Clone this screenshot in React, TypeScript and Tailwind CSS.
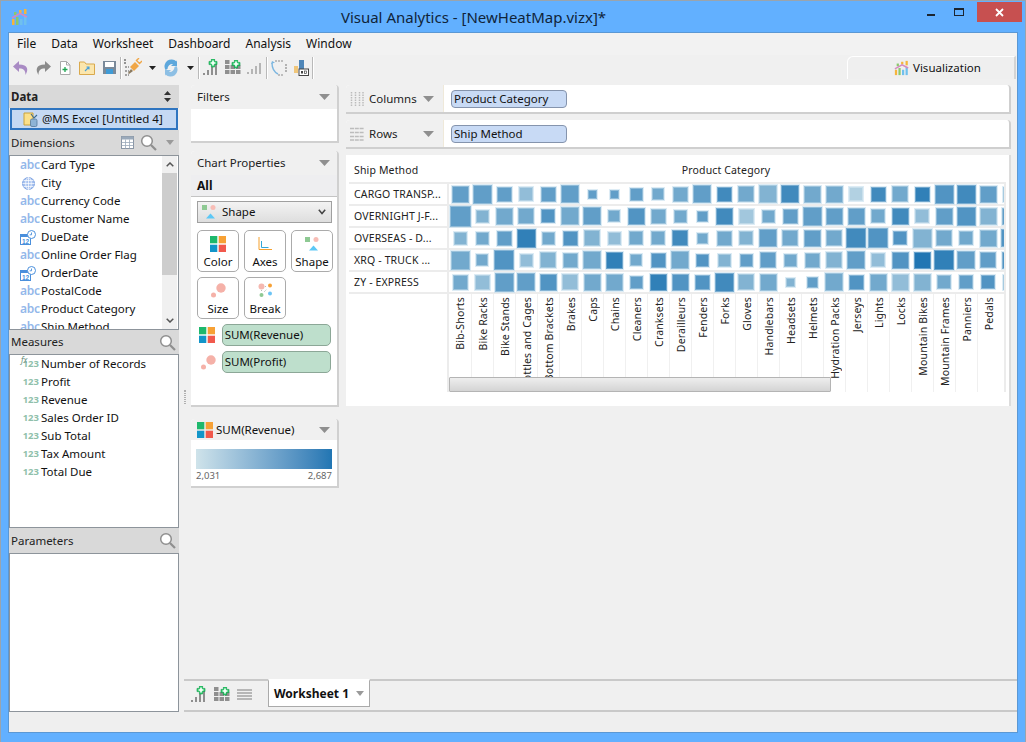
import React from "react";

const UI = "font-['Open_Sans',sans-serif]";
const CHART = "font-['Liberation_Sans',Arial,sans-serif]";

const S = ({ w = 20, h = 20, vb = "0 0 20 20", children }: { w?: number; h?: number; vb?: string; children: React.ReactNode }) => (
  <svg width={w} height={h} viewBox={vb} className="shrink-0 block">{children}</svg>
);

const Plus = ({ x, y, s = 10 }: { x: number; y: number; s?: number }) => (
  <g transform={`translate(${x} ${y}) scale(${s / 10})`}>
    <path d="M3 0h4v3h3v4H7v3H3V7H0V3h3z" fill="#2fd26f" stroke="#0f9c4a" strokeWidth="0.8" />
    <path d="M4 2h2v2h2v2H6v2H4V6H2V4h2z" fill="#fff" />
  </g>
);

const AppLogo = ({ size = 18 }: { size?: number }) => (
  <S w={size} h={size} vb="0 0 18 18">
    <rect x="1" y="11" width="2.5" height="6" fill="#f5b53c" />
    <rect x="5" y="9" width="2.5" height="8" fill="#8cc86c" />
    <rect x="9" y="11" width="2.5" height="6" fill="#6fc0ee" />
    <rect x="13" y="8" width="2.5" height="9" fill="#6fc0ee" />
    <rect x="3" y="4" width="2.5" height="3" fill="#8cc86c" />
    <rect x="8" y="2" width="2.5" height="3" fill="#f5b53c" />
    <rect x="13" y="1" width="2.5" height="5" fill="#f5b53c" />
    <path d="M1 10 L9 5.5 L16 9" stroke="#d48ac0" strokeWidth="1.6" fill="none" />
  </S>
);

const Undo = () => (
  <S w={18} h={16} vb="0 0 18 16"><path d="M7 1 L1 6.5 L7 12 V8.5 C11 8.3 13.5 10 13.5 15 C16.5 10 16.5 4.5 7 4.5 Z" fill="#a98bc4" /></S>
);
const Redo = () => (
  <S w={18} h={16} vb="0 0 18 16"><path d="M11 1 L17 6.5 L11 12 V8.5 C7 8.3 4.5 10 4.5 15 C1.5 10 1.5 4.5 11 4.5 Z" fill="#8b8b8b" /></S>
);
const NewDoc = () => (
  <S w={14} h={16} vb="0 0 14 16">
    <path d="M2.5 1.5h6l3.5 3.5v9.5h-9.5z" fill="#fff" stroke="#a9a9a9" />
    <path d="M8.5 1.5v3.5h3.5" fill="none" stroke="#a9a9a9" />
    <path d="M7 7v5M4.5 9.5h5" stroke="#1fa653" strokeWidth="1.3" />
  </S>
);
const Folder = () => (
  <S w={16} h={14} vb="0 0 16 14">
    <path d="M.5 1h5l1.5 2h8.5v10.5H.5z" fill="#fbe6ad" stroke="#d9a94d" />
    <path d="M6 10l4-4M7.5 6H10v2.5" stroke="#4aa0d8" strokeWidth="1.1" fill="none" />
  </S>
);
const Save = () => (
  <S w={15} h={15} vb="0 0 15 15">
    <rect x="1" y="1" width="13" height="13" fill="#7a8a9a" />
    <rect x="3" y="2" width="9" height="5" fill="#fff" />
    <rect x="4" y="9" width="7" height="5" fill="#3f9bd6" />
  </S>
);
const Plug = () => (
  <S w={18} h={20} vb="0 0 18 20">
    <path d="M1 1v5M1 9h4M1 13h4M1 17h4" stroke="#555" strokeWidth="1.2" strokeDasharray="2 1" />
    <path d="M6 9l5-5 4 4-5 5z" fill="#f0a646" />
    <path d="M12 2l4 4M15 0l-3 3M18 3l-3 3" stroke="#f0a646" strokeWidth="1.4" />
    <path d="M4 15l3-4 2 2-4 3z" fill="#8a7a60" />
  </S>
);
const Refresh = () => (
  <S w={16} h={18} vb="0 0 16 18">
    <path d="M13.5 2.5A7 7 0 0 0 2.5 11l2-1A5 5 0 0 1 10 5L8 7h6V1z" fill="#5da7dc" />
    <path d="M2.5 15.5A7 7 0 0 0 13.5 7l-2 1A5 5 0 0 1 6 13l2-2H2v6z" fill="#8dbfe4" />
  </S>
);
const Arrow = ({ color = "#222" }: { color?: string }) => (
  <S w={7} h={4} vb="0 0 7 4"><path d="M0 0h7L3.5 4z" fill={color} /></S>
);
const Bars = ({ plus }: { plus?: boolean }) => (
  <S w={16} h={plus ? 18 : 16} vb={plus ? "0 0 16 18" : "0 0 16 16"}>
    <g fill={plus ? "#8f8f8f" : "#b5b5b5"} transform={plus ? "translate(0 2)" : ""}>
      <rect x="0" y="12" width="2" height="2" />
      <rect x="4" y="9" width="2" height="5" />
      <rect x="8" y="6" width="2" height="8" />
      <rect x="12" y="3" width="2" height="11" />
    </g>
    {plus && <Plus x={6} y={0} s={8} />}
  </S>
);
const GridPlus = () => (
  <S w={16} h={15} vb="0 0 16 15">
    <g fill="#8f8f8f">
      {[0, 5.5, 11].map((x) => [0, 5, 10].map((y) => (!(x > 5 && y < 5) ? <rect key={`${x}${y}`} x={x} y={y} width="4.5" height="4" /> : null)))}
    </g>
    <Plus x={7} y={0} s={8} />
  </S>
);
const Rotate = () => (
  <S w={16} h={16} vb="0 0 16 16">
    <path d="M4 1h9M15 4v8M12 15H6" stroke="#8a8a8a" strokeWidth="1.2" strokeDasharray="2 1" fill="none" />
    <path d="M1 3 C1 8 3 12 7 14" stroke="#7db7e0" strokeWidth="1.4" fill="none" />
    <path d="M0 4l1-3 3 1.500z" fill="#7db7e0" />
  </S>
);
const BarLock = () => (
  <S w={15} h={16} vb="0 0 15 16">
    <rect x="0" y="6" width="4" height="7" fill="#f0c67a" />
    <rect x="5" y="0" width="5" height="9" fill="#4f86b8" />
    <rect x="5" y="9" width="9.500" height="6.500" fill="#fff" stroke="#444" />
    <rect x="7" y="11" width="2" height="2.500" fill="#444" />
    <rect x="10.500" y="11" width="2" height="2.500" fill="none" stroke="#444" strokeWidth="0.7" />
  </S>
);
const Search = () => (
  <S w={17} h={17} vb="0 0 17 17">
    <circle cx="7" cy="7" r="5.300" fill="#fff" stroke="#8f8f8f" strokeWidth="1.500" />
    <path d="M11 11l5 5" stroke="#8f8f8f" strokeWidth="2.200" />
  </S>
);
const TableIcon = () => (
  <S w={13} h={13} vb="0 0 13 13">
    <rect x=".5" y=".5" width="12" height="12" fill="#fff" stroke="#8a96a5" />
    <rect x=".5" y=".5" width="12" height="3" fill="#9aa9ba" />
    <path d="M4.500 3.500v9M8.500 3.500v9M.5 6.500h12M.5 9.500h12" stroke="#9aa9ba" strokeWidth=".8" />
  </S>
);
const Globe = () => (
  <S w={13} h={13} vb="0 0 13 13">
    <circle cx="6.500" cy="6.500" r="6" fill="#a9c3ef" stroke="#7fa4e2" />
    <ellipse cx="6.500" cy="6.500" rx="2.800" ry="6" fill="none" stroke="#fff" strokeWidth=".7" />
    <path d="M.5 6.500h12M1.500 3.500h10M1.500 9.500h10M6.500 .5v12" stroke="#fff" strokeWidth=".7" />
  </S>
);
const DateIcon = () => (
  <S w={16} h={15} vb="0 0 16 15">
    <rect x=".5" y="4.500" width="10" height="10" fill="#fff" stroke="#4a8fdc" />
    <rect x=".5" y="4.500" width="10" height="2.500" fill="#4a8fdc" />
    <text x="2" y="13.500" fontSize="6.500" fontWeight="700" fill="#4a8fdc" fontFamily="Liberation Sans">12</text>
    <circle cx="11.500" cy="4.500" r="4" fill="#fff" stroke="#4a8fdc" />
    <path d="M11.500 2.500v2.300h-1.800" stroke="#4a8fdc" fill="none" strokeWidth=".9" />
  </S>
);
const DataSource = () => (
  <S w={15} h={15} vb="0 0 15 15">
    <path d="M1 1h9v12H1z" fill="#fbe08a" stroke="#c9a23c" />
    <path d="M8 2l3 4 3-3" stroke="#3a6a8c" fill="none" strokeWidth="1.100" />
    <rect x="7.500" y="7" width="6.500" height="7.500" rx="1.500" fill="#8db3d6" stroke="#54789c" strokeWidth=".8" />
  </S>
);
const ColorSq = ({ size = 16 }: { size?: number }) => (
  <S w={size} h={size} vb="0 0 16 16">
    <rect x="0" y="0" width="7.300" height="7.300" fill="#1eb86c" />
    <rect x="8.700" y="0" width="7.300" height="7.300" fill="#f7a135" />
    <rect x="0" y="8.700" width="7.300" height="7.300" fill="#1295c9" />
    <rect x="8.700" y="8.700" width="7.300" height="7.300" fill="#f1594d" />
  </S>
);
const ShapeIcon = () => (
  <S w={14} h={14} vb="0 0 14 14">
    <rect x="0" y="0" width="5" height="5" fill="#8ec993" />
    <circle cx="11" cy="2.500" r="2.500" fill="#f8bdb6" />
    <path d="M4 13.500h9L8.500 8.500z" fill="#5cc8f6" />
  </S>
);
const SizeIcon = ({ w = 15 }: { w?: number }) => (
  <S w={w} h={w} vb="0 0 15 15">
    <circle cx="10" cy="5" r="4.700" fill="#f5b1a8" />
    <circle cx="2.500" cy="12" r="2.500" fill="#f5b1a8" />
  </S>
);
const AxesIcon = () => (
  <S w={14} h={14} vb="0 0 14 14">
    <path d="M1 0v12.500h13" stroke="#f5a12f" strokeWidth="1" fill="none" />
    <path d="M3.500 4v6.500h7" stroke="#33a7d8" strokeWidth="1" fill="none" />
  </S>
);
const BreakIcon = () => (
  <S w={15} h={15} vb="0 0 15 15">
    <circle cx="3.500" cy="3.500" r="3" fill="#f5b8b0" />
    <circle cx="12" cy="2.500" r="2" fill="#f7a135" />
    <circle cx="3.500" cy="12" r="2" fill="#8ec993" />
    <circle cx="12" cy="10.500" r="2" fill="#6cc4f5" />
    <path d="M7 3.500h2M3.500 7v2M6 9l3-3" stroke="#aaa" strokeWidth=".8" strokeDasharray="1 1" />
  </S>
);

const Caret = () => (
  <S w={11} h={6} vb="0 0 11 6"><path d="M0 0h11L5.500 6z" fill="#8f8f8f" /></S>
);

const Abc = () => <span className={`w-[19px] text-[12px] leading-none font-semibold text-[#93b7ea] tracking-[-0.3px] ${CHART}`}>abc</span>;
const N123 = ({ fx }: { fx?: boolean }) => (
  <span className={`relative w-[19px] text-[9.5px] leading-none font-bold text-right text-[#8fbfab] ${CHART}`}>
    {fx && <i className="absolute left-[1px] -top-[3px] text-[8px] font-normal text-[#6f9585]">fx</i>}
    123
  </span>
);

const dims: [string, "a" | "g" | "d"][] = [
  ["Card Type", "a"], ["City", "g"], ["Currency Code", "a"], ["Customer Name", "a"], ["DueDate", "d"],
  ["Online Order Flag", "a"], ["OrderDate", "d"], ["PostalCode", "a"], ["Product Category", "a"], ["Ship Method", "a"],
];
const meas = ["Number of Records", "Profit", "Revenue", "Sales Order ID", "Sub Total", "Tax Amount", "Total Due"];
const cats = ["Bib-Shorts", "Bike Racks", "Bike Stands", "Bottles and Cages", "Bottom Brackets", "Brakes", "Caps", "Chains", "Cleaners", "Cranksets", "Derailleurs", "Fenders", "Forks", "Gloves", "Handlebars", "Headsets", "Helmets", "Hydration Packs", "Jerseys", "Lights", "Locks", "Mountain Bikes", "Mountain Frames", "Panniers", "Pedals"];

const rowsData: { name: string; sizes: number[]; shade: number[] }[] = [
  { name: "CARGO TRANSP...", sizes: [18,20,16,15,16,19,10,10,14,13,16,19,16,17,19,19,18,18,15,16,17,16,20,20,18,16], shade: [5,5,5,2,5,5,5,5,5,4,4,5,7,4,3,7,4,4,0,7,4,8,6,7,5,3] },
  { name: "OVERNIGHT J-F...", sizes: [22,14,18,17,15,19,19,13,18,16,14,12,18,16,14,16,20,18,18,15,18,15,18,20,18,18], shade: [5,3,4,4,6,4,5,4,6,4,4,5,7,1,4,5,5,5,5,4,7,2,5,6,3,5] },
  { name: "OVERSEAS - D...", sizes: [14,14,16,20,14,16,17,14,15,15,17,12,16,15,19,17,18,17,21,21,15,20,17,15,18,19], shade: [3,4,5,8,4,6,3,2,4,4,7,4,4,3,5,4,5,4,7,6,6,3,4,4,4,6] },
  { name: "XRQ - TRUCK ...", sizes: [20,13,21,14,17,16,19,18,13,16,19,14,14,14,17,14,16,17,19,15,18,18,21,19,17,18], shade: [4,4,6,2,3,4,4,8,4,6,4,6,3,5,5,4,4,3,5,2,6,9,8,5,5,6] },
  { name: "ZY - EXPRESS", sizes: [16,16,20,19,18,17,18,18,14,18,18,16,20,17,18,10,12,19,16,18,18,18,15,15,15,16], shade: [4,2,5,5,6,2,4,4,5,8,6,6,7,3,4,3,5,4,6,4,2,3,4,5,6,3] },
];

const shadeColor = (v: number) => {
  const t = v / 9;
  const a = [178, 209, 226];
  const b = [33, 118, 179];
  return `rgb(${a.map((c, i) => Math.round(c + (b[i] - c) * t)).join(",")})`;
};

const TBtn = ({ w = 22, children }: { w?: number; children: React.ReactNode }) => (
  <div className="h-[25px] flex items-center justify-center shrink-0" style={{ width: w }}>{children}</div>
);
const TSep = () => <div className="w-[2px] h-[22px] bg-[#b9b9b9] border-r border-white shrink-0" />;

const FieldRow = ({ icon, label }: { icon: React.ReactNode; label: string }) => (
  <div className="h-[18px] pl-[10px] flex items-center shrink-0 whitespace-nowrap">
    <div className="w-[20px] flex justify-start items-center">{icon}</div>
    <span className="text-[#111] ml-[1px]">{label}</span>
  </div>
);

const SideHeader = ({ label, h, children }: { label: string; h: number; children?: React.ReactNode }) => (
  <div className="bg-[#d9d9d9] pl-[2px] pr-[2px] flex items-center justify-between shrink-0" style={{ height: h }}>
    <span className="text-[#222]">{label}</span>
    <div className="flex items-center gap-[6px]">{children}</div>
  </div>
);

const Card = ({ className = "", children }: { className?: string; children: React.ReactNode }) => (
  <div className={`bg-white rounded-t-[4px] border-r-2 border-b-2 border-[#d0d0d0] overflow-hidden ${className}`}>{children}</div>
);
const CardHead = ({ children }: { children: React.ReactNode }) => (
  <div className="h-[24px] bg-[#f0f0f0] pl-[6px] pr-[7px] flex items-center justify-between text-[#222] shrink-0">{children}</div>
);

const PropBtn = ({ icon, label }: { icon: React.ReactNode; label: string }) => (
  <div className="w-[42px] h-[42px] rounded-[5px] border border-[#ababab] bg-white flex flex-col items-center pt-[4px] shrink-0">
    <div className="h-[17px] flex items-center justify-center">{icon}</div>
    <span className="mt-[2px] text-[#111]">{label}</span>
  </div>
);
const GreenPill = ({ label }: { label: string }) => (
  <div className="h-[22px] w-[111px] rounded-[5px] bg-[#bedfcc] border border-[#8ca797] pl-[2px] flex items-center text-[#111]">{label}</div>
);
const BluePill = ({ label }: { label: string }) => (
  <div className="w-[116px] h-[18px] rounded-[4px] bg-[#c8daf5] border border-[#8594ad] pl-[2px] flex items-center text-[#111]">{label}</div>
);
const Shelf = ({ icon, label, pill }: { icon: React.ReactNode; label: string; pill: string }) => (
  <div className="h-[29px] bg-white rounded-t-[4px] border-b-2 border-r-2 border-[#cfcfcf] flex overflow-hidden shrink-0">
    <div className="w-[98px] bg-[#f0f0f0] border-r border-[#efe9da] flex items-center pl-[4px] pr-[9px] shrink-0">
      <div className="w-[19px]">{icon}</div>
      <span className="flex-1 text-[#222]">{label}</span>
      <Caret />
    </div>
    <div className="pl-[7px] pt-[5px]"><BluePill label={pill} /></div>
  </div>
);

export default function App() {
  return (
    <div className={`w-[1026px] h-[742px] flex flex-col bg-[#62b0ff] border-t border-x border-[#9aa4ad] text-[11.500px] leading-[16px] overflow-hidden ${UI}`}>
      {/* title bar */}
      <div className="h-[31px] flex items-start shrink-0 pl-[10px]">
        <div className="pt-[7px] w-[18px]"><AppLogo /></div>
        <div className="flex-1 pt-[6px] pl-[0px] text-center text-[15px] leading-[20px] text-[#10243a]">Visual Analytics - [NewHeatMap.vizx]*</div>
        <div className="flex items-start pr-[3px]">
          <div className="w-[26px] h-[20px] flex justify-center pt-[13px]"><div className="w-[8px] h-[2px] bg-[#1c2530]" /></div>
          <div className="w-[30px] h-[20px] flex justify-center pt-[7px]"><div className="w-[10px] h-[8px] border border-[#1c2530] border-t-2" /></div>
          <div className="w-[45px] h-[20px] bg-[#c75050] flex items-center justify-center ml-[3px] mt-[1px] text-white">
            <S w={9} h={9} vb="0 0 9 9"><path d="M1 1l7 7M8 1l-7 7" stroke="#fff" strokeWidth="1.800" /></S>
          </div>
        </div>
      </div>

      {/* inner window */}
      <div className="h-[701px] mx-[7px] w-[1010px] border border-[#5b98d4] bg-[#f0f0f0] flex flex-col shrink-0">
        {/* menu */}
        <div className="h-[22px] bg-[#f2f2f2] flex items-center pl-[8px] gap-[15px] text-[#111] text-[12px] shrink-0">
          <span>File</span><span>Data</span><span>Worksheet</span><span>Dashboard</span><span>Analysis</span><span>Window</span>
        </div>
        {/* toolbar */}
        <div className="h-[25px] flex items-center pl-[1px] shrink-0">
          <TBtn><Undo /></TBtn><TBtn><Redo /></TBtn><TBtn><NewDoc /></TBtn><TBtn><Folder /></TBtn><TBtn><Save /></TBtn>
          <TSep />
          <TBtn><Plug /></TBtn><TBtn w={16}><Arrow /></TBtn><TBtn><Refresh /></TBtn><TBtn w={16}><Arrow /></TBtn>
          <TSep />
          <TBtn><Bars plus /></TBtn><TBtn><GridPlus /></TBtn><TBtn><Bars /></TBtn>
          <TSep />
          <TBtn><Rotate /></TBtn><TBtn><BarLock /></TBtn>
          <TSep />
          <div className="flex-1" />
          <div className="w-[169px] h-[23px] mr-[1px] rounded-tl-[6px] border-t border-l border-r-2 border-t-white border-l-white border-r-[#d4d4d4] bg-[#efefef] flex items-center pl-[46px] gap-[3px] text-[#111]">
            <AppLogo size={16} /><span>Visualization</span>
          </div>
        </div>

        {/* main */}
        <div className="flex-1 flex min-h-0 pt-[5px]">
          {/* left column */}
          <div className="w-[170px] flex flex-col shrink-0">
            <div className="h-[23px] bg-[#d9d9d9] pl-[2px] pr-[8px] flex items-center justify-between shrink-0">
              <span className="font-bold text-[#222]">Data</span>
              <S w={7} h={11} vb="0 0 7 11"><path d="M3.500 0L7 4H0zM3.500 11L0 7h7z" fill="#333" /></S>
            </div>
            <div className="h-[22px] mx-[1px] border-2 border-[#2f75c0] bg-[#c5d9f3] flex items-center pl-[11px] gap-[4px] text-[#111] shrink-0">
              <DataSource /><span>@MS Excel [Untitled 4]</span>
            </div>
            <SideHeader label="Dimensions" h={25}>
              <TableIcon /><Search /><div className="pr-[3px] pl-[3px]"><S w={8} h={5} vb="0 0 8 5"><path d="M0 0h8L4 5z" fill="#9a9a9a" /></S></div>
            </SideHeader>
            <div className="h-[175px] border border-[#8d949b] bg-white flex overflow-hidden shrink-0">
              <div className="flex-1 flex flex-col overflow-hidden">
                {dims.map(([n, t]) => (
                  <FieldRow key={n} label={n} icon={t === "a" ? <Abc /> : t === "g" ? <div className="pl-[2px]"><Globe /></div> : <DateIcon />} />
                ))}
              </div>
              <div className="w-[15px] mr-[1px] bg-[#f0f0f0] flex flex-col items-center shrink-0">
                <div className="h-[17px] flex items-center justify-center">
                  <S w={8} h={5} vb="0 0 8 5"><path d="M.7 4.300L4 1l3.300 3.300" stroke="#555" strokeWidth="1.500" fill="none" /></S>
                </div>
                <div className="w-full h-[102px] bg-[#cdcdcd]" />
                <div className="flex-1" />
                <div className="h-[17px] flex items-center justify-center">
                  <S w={8} h={5} vb="0 0 8 5"><path d="M.7 .7L4 4l3.300-3.300" stroke="#555" strokeWidth="1.500" fill="none" /></S>
                </div>
              </div>
            </div>
            <SideHeader label="Measures" h={24}><div className="pr-[1px]"><Search /></div></SideHeader>
            <div className="h-[174px] border border-[#8d949b] bg-white flex flex-col shrink-0">
              {meas.map((m, i) => (
                <FieldRow key={m} label={m} icon={<N123 fx={i === 0} />} />
              ))}
            </div>
            <SideHeader label="Parameters" h={25}><div className="pr-[1px]"><Search /></div></SideHeader>
            <div className="flex-1 border border-[#8d949b] bg-white" />
          </div>

          {/* splitter and right part */}
          <div className="flex-1 flex flex-col min-w-0">
            <div className="flex-1 flex min-h-0">
              <div className="w-[12px] shrink-0 flex items-start justify-center pt-[305px]">
                <div className="w-[2px] h-[14px] border-x border-dotted border-[#b0b0b0]" />
              </div>
              {/* middle */}
              <div className="w-[148px] flex flex-col shrink-0">
                <Card className="h-[58px]"><CardHead><span>Filters</span><Caret /></CardHead></Card>
                <Card className="h-[256px] mt-[8px] flex flex-col">
                  <CardHead><span>Chart Properties</span><Caret /></CardHead>
                  <div className="h-[22px] bg-[#eeeef0] border-b border-[#c4c4c4] pl-[6px] flex items-center font-bold text-[12px] text-[#111] shrink-0">All</div>
                  <div className="px-[6px] pt-[4px] flex flex-col">
                    <div className="h-[22px] w-[135px] border border-[#a0a0a0] bg-gradient-to-b from-[#f3f3f3] to-[#dedede] flex items-center pl-[4px] pr-[5px] text-[#111]">
                      <ShapeIcon /><span className="flex-1 ml-[6px]">Shape</span>
                      <S w={8} h={6} vb="0 0 8 6"><path d="M.8 .8L4 4.500 7.200 .8" stroke="#444" strokeWidth="1.500" fill="none" /></S>
                    </div>
                    <div className="flex gap-[5px] mt-[7px]">
                      <PropBtn icon={<ColorSq />} label="Color" />
                      <PropBtn icon={<AxesIcon />} label="Axes" />
                      <PropBtn icon={<ShapeIcon />} label="Shape" />
                    </div>
                    <div className="flex gap-[5px] mt-[5px]">
                      <PropBtn icon={<SizeIcon />} label="Size" />
                      <PropBtn icon={<BreakIcon />} label="Break" />
                    </div>
                    <div className="flex items-center mt-[5px]">
                      <div className="w-[25px] pl-[2px]"><ColorSq /></div><GreenPill label="SUM(Revenue)" />
                    </div>
                    <div className="flex items-center mt-[5px]">
                      <div className="w-[25px] pl-[4px]"><SizeIcon /></div><GreenPill label="SUM(Profit)" />
                    </div>
                  </div>
                </Card>
                <Card className="h-[69px] mt-[12px]">
                  <div className="h-[21px] bg-[#f0f0f0] pl-[6px] pr-[7px] flex items-center justify-between text-[#111]">
                    <div className="flex items-center gap-[3px]"><ColorSq /><span>SUM(Revenue)</span></div>
                    <Caret />
                  </div>
                  <div className="mx-[5px] mt-[9px] h-[20px] bg-gradient-to-r from-[#cfe3ea] to-[#2176b3]" />
                  <div className="mx-[5px] flex justify-between text-[9.500px] leading-[14px] text-[#666]"><span>2,031</span><span>2,687</span></div>
                </Card>
              </div>
              {/* right */}
              <div className="w-[665px] ml-[7px] flex flex-col shrink-0">
                <Shelf label="Columns" pill="Product Category" icon={
                  <S w={14} h={14} vb="0 0 14 14"><path d="M1.500 0v14M5.500 0v14M9.500 0v14M13 0v14" stroke="#bcbcbc" strokeWidth="1.500" strokeDasharray="1.500 1" /></S>
                } />
                <div className="h-[6px] shrink-0" />
                <Shelf label="Rows" pill="Ship Method" icon={
                  <S w={14} h={14} vb="0 0 14 14"><path d="M0 1.500h14M0 5.500h14M0 9.500h14M0 13h14" stroke="#bcbcbc" strokeWidth="1.500" strokeDasharray="4 .8" /></S>
                } />
                <div className="h-[6px] shrink-0" />
                <div className={`h-[251px] bg-white border-r-2 border-[#dcdcdc] shrink-0 text-[10.500px] tracking-[0.15px] text-[#222] overflow-hidden ${CHART}`}>
                  {/* header */}
                  <div className="h-[27px] flex items-end pb-[4px]">
                    <div className="w-[101px] pl-[8px]">Ship Method</div>
                    <div className="w-[558px] text-center">Product Category</div>
                  </div>
                  {/* grid */}
                  <div className="flex">
                    <div className="w-[101px] pl-[3px] shrink-0">
                      <div className="h-[2px] bg-[#ececec]" />
                      {rowsData.map((r) => (
                        <div key={r.name} className="h-[22px] border-b-2 border-[#ececec] pl-[5px] flex items-center whitespace-nowrap overflow-hidden">{r.name}</div>
                      ))}
                    </div>
                    <div className="w-[559px] border-l-2 border-r-2 border-[#ececec] shrink-0 overflow-hidden">
                      <div className="h-[2px] bg-[#ececec]" />
                      {rowsData.map((r) => (
                        <div key={r.name} className="h-[22px] border-b-2 border-[#ececec] flex">
                          {r.sizes.map((s, i) => (
                            <div key={i} className="w-[22px] h-[20px] flex items-center justify-center shrink-0">
                              <div
                                className="shrink-0 border border-white/30 outline outline-1 outline-[#c6dfee]/60"
                                style={{ width: s - 1, height: s - 1, backgroundColor: shadeColor(r.shade[i]) }}
                              />
                            </div>
                          ))}
                        </div>
                      ))}
                      {/* category labels */}
                      <div className="h-[98px] flex items-start relative">
                        {cats.map((c) => (
                          <div key={c} className="w-[22px] h-[98px] flex justify-center shrink-0 border-l border-[#f0f0f0] first:border-l-0 pt-[3px]">
                            <div className="[writing-mode:vertical-rl] rotate-180 h-fit whitespace-nowrap text-[10.500px] leading-[14px]">{c}</div>
                          </div>
                        ))}
                        <div className="absolute left-0 bottom-0 w-[382px] h-[15px] border border-[#b4b4b4] bg-gradient-to-b from-[#eeeeee] to-[#d4d4d4] rounded-[1px]" />
                      </div>
                    </div>
                  </div>
                </div>
              </div>
            </div>
            {/* tabs */}
            <div className="h-[33px] ml-[5px] border-t-2 border-[#c9c9c9] border-b-2 flex items-start pl-[7px] shrink-0">
              <div className="h-[27px] flex items-center gap-[7px] w-[77px]">
                <Bars plus />
                <GridPlus />
                <S w={15} h={11} vb="0 0 15 11"><path d="M0 1h15M0 4h15M0 7h15M0 10h15" stroke="#a3a3a3" strokeWidth="1.500" /></S>
              </div>
              <div className="w-[102px] h-[28px] -mt-[2px] bg-white border-x border-b border-[#aaa] border-t-2 border-t-white flex items-center pl-[5px] pr-[5px] justify-between font-bold text-[12px] text-[#111]">
                <span>Worksheet 1</span>
                <S w={8} h={5} vb="0 0 8 5"><path d="M0 0h8L4 5z" fill="#9a9a9a" /></S>
              </div>
            </div>
          </div>
        </div>
        {/* status */}
        <div className="h-[20px] bg-[#efefef] shrink-0" />
      </div>
    </div>
  );
}
